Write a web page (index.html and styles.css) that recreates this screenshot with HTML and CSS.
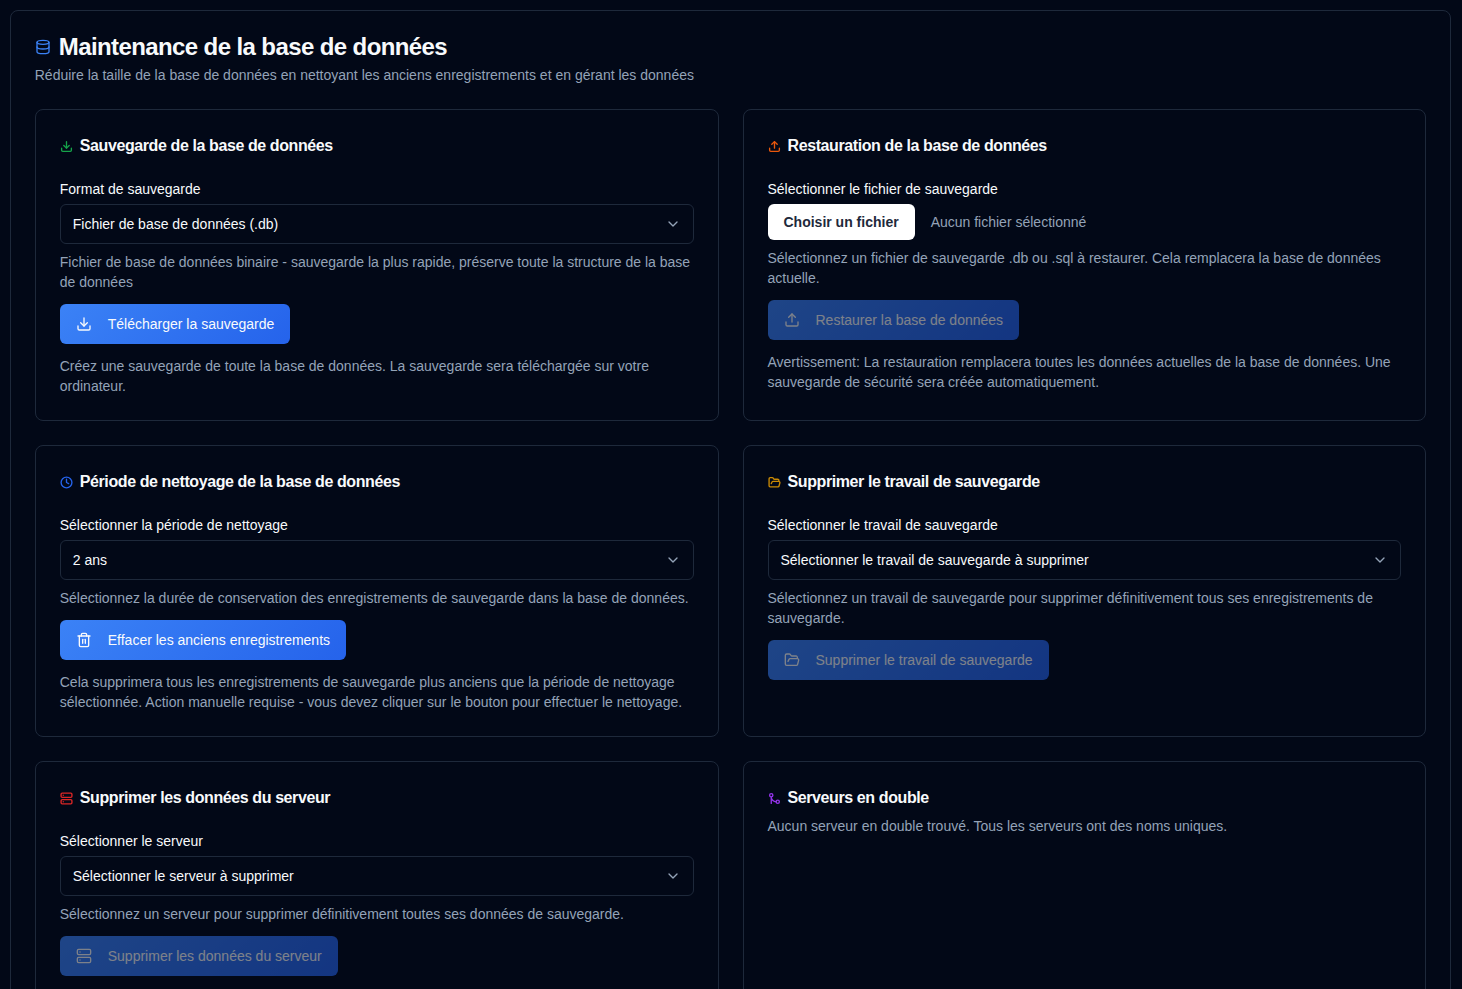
FILE: index.html
```html
<!DOCTYPE html>
<html lang="fr">
<head>
<meta charset="utf-8">
<title>Maintenance de la base de données</title>
<link rel="stylesheet" href="styles.css">
</head>
<body>
<main class="panel">
  <header class="panel-head">
    <h1 class="panel-title">
      <svg class="icon icon-16 c-blue" viewBox="0 0 24 24"><ellipse cx="12" cy="5" rx="9" ry="3"/><path d="M3 5V19A9 3 0 0 0 21 19V5"/><path d="M3 12A9 3 0 0 0 21 12"/></svg>
      Maintenance de la base de données
    </h1>
    <p class="panel-sub">Réduire la taille de la base de données en nettoyant les anciens enregistrements et en gérant les données</p>
  </header>
  <div class="grid">
    <section class="card">
      <h2 class="card-title"><svg class="icon icon-13 c-green" viewBox="0 0 24 24"><path d="M21 15v4a2 2 0 0 1-2 2H5a2 2 0 0 1-2-2v-4"/><polyline points="7 10 12 15 17 10"/><line x1="12" y1="15" x2="12" y2="3"/></svg>Sauvegarde de la base de données</h2>
      <div class="label">Format de sauvegarde</div>
      <div class="select"><span>Fichier de base de données (.db)</span><svg class="icon icon-16 chev" viewBox="0 0 24 24"><path d="m6 9 6 6 6-6"/></svg></div>
      <p class="hint">Fichier de base de données binaire - sauvegarde la plus rapide, préserve toute la structure de la base de données</p>
      <button class="btn"><svg class="icon icon-16" viewBox="0 0 24 24"><path d="M21 15v4a2 2 0 0 1-2 2H5a2 2 0 0 1-2-2v-4"/><polyline points="7 10 12 15 17 10"/><line x1="12" y1="15" x2="12" y2="3"/></svg>Télécharger la sauvegarde</button>
      <p class="note">Créez une sauvegarde de toute la base de données. La sauvegarde sera téléchargée sur votre ordinateur.</p>
    </section>
    <section class="card">
      <h2 class="card-title"><svg class="icon icon-13 c-orange" viewBox="0 0 24 24"><path d="M21 15v4a2 2 0 0 1-2 2H5a2 2 0 0 1-2-2v-4"/><polyline points="17 8 12 3 7 8"/><line x1="12" y1="3" x2="12" y2="15"/></svg>Restauration de la base de données</h2>
      <div class="label">Sélectionner le fichier de sauvegarde</div>
      <div class="file"><button class="file-btn">Choisir un fichier</button><span class="file-name">Aucun fichier sélectionné</span></div>
      <p class="hint">Sélectionnez un fichier de sauvegarde .db ou .sql à restaurer. Cela remplacera la base de données actuelle.</p>
      <button class="btn is-disabled"><svg class="icon icon-16" viewBox="0 0 24 24"><path d="M21 15v4a2 2 0 0 1-2 2H5a2 2 0 0 1-2-2v-4"/><polyline points="17 8 12 3 7 8"/><line x1="12" y1="3" x2="12" y2="15"/></svg>Restaurer la base de données</button>
      <p class="note">Avertissement: La restauration remplacera toutes les données actuelles de la base de données. Une sauvegarde de sécurité sera créée automatiquement.</p>
    </section>
    <section class="card">
      <h2 class="card-title"><svg class="icon icon-13 c-blue2" viewBox="0 0 24 24"><circle cx="12" cy="12" r="10"/><polyline points="12 6 12 12 16 14"/></svg>Période de nettoyage de la base de données</h2>
      <div class="label">Sélectionner la période de nettoyage</div>
      <div class="select"><span>2 ans</span><svg class="icon icon-16 chev" viewBox="0 0 24 24"><path d="m6 9 6 6 6-6"/></svg></div>
      <p class="hint">Sélectionnez la durée de conservation des enregistrements de sauvegarde dans la base de données.</p>
      <button class="btn"><svg class="icon icon-16" viewBox="0 0 24 24"><path d="M3 6h18"/><path d="M19 6v14c0 1-1 2-2 2H7c-1 0-2-1-2-2V6"/><path d="M8 6V4c0-1 1-2 2-2h4c1 0 2 1 2 2v2"/><line x1="10" y1="11" x2="10" y2="17"/><line x1="14" y1="11" x2="14" y2="17"/></svg>Effacer les anciens enregistrements</button>
      <p class="note">Cela supprimera tous les enregistrements de sauvegarde plus anciens que la période de nettoyage sélectionnée. Action manuelle requise - vous devez cliquer sur le bouton pour effectuer le nettoyage.</p>
    </section>
    <section class="card">
      <h2 class="card-title"><svg class="icon icon-13 c-yellow" viewBox="0 0 24 24"><path d="m6 14 1.45-2.9A2 2 0 0 1 9.24 10H20a2 2 0 0 1 1.94 2.5l-1.55 6a2 2 0 0 1-1.94 1.5H4a2 2 0 0 1-2-2V5c0-1.1.9-2 2-2h3.93a2 2 0 0 1 1.66.9l.82 1.2a2 2 0 0 0 1.66.9H18a2 2 0 0 1 2 2v2"/></svg>Supprimer le travail de sauvegarde</h2>
      <div class="label">Sélectionner le travail de sauvegarde</div>
      <div class="select"><span>Sélectionner le travail de sauvegarde à supprimer</span><svg class="icon icon-16 chev" viewBox="0 0 24 24"><path d="m6 9 6 6 6-6"/></svg></div>
      <p class="hint">Sélectionnez un travail de sauvegarde pour supprimer définitivement tous ses enregistrements de sauvegarde.</p>
      <button class="btn is-disabled"><svg class="icon icon-16" viewBox="0 0 24 24"><path d="m6 14 1.45-2.9A2 2 0 0 1 9.24 10H20a2 2 0 0 1 1.94 2.5l-1.55 6a2 2 0 0 1-1.94 1.5H4a2 2 0 0 1-2-2V5c0-1.1.9-2 2-2h3.93a2 2 0 0 1 1.66.9l.82 1.2a2 2 0 0 0 1.66.9H18a2 2 0 0 1 2 2v2"/></svg>Supprimer le travail de sauvegarde</button>
    </section>
    <section class="card">
      <h2 class="card-title"><svg class="icon icon-13 c-red" viewBox="0 0 24 24"><rect x="2" y="2" width="20" height="8" rx="2"/><rect x="2" y="14" width="20" height="8" rx="2"/><line x1="6" y1="6" x2="6.01" y2="6"/><line x1="6" y1="18" x2="6.01" y2="18"/></svg>Supprimer les données du serveur</h2>
      <div class="label">Sélectionner le serveur</div>
      <div class="select"><span>Sélectionner le serveur à supprimer</span><svg class="icon icon-16 chev" viewBox="0 0 24 24"><path d="m6 9 6 6 6-6"/></svg></div>
      <p class="hint">Sélectionnez un serveur pour supprimer définitivement toutes ses données de sauvegarde.</p>
      <button class="btn is-disabled"><svg class="icon icon-16" viewBox="0 0 24 24"><rect x="2" y="2" width="20" height="8" rx="2"/><rect x="2" y="14" width="20" height="8" rx="2"/><line x1="6" y1="6" x2="6.01" y2="6"/><line x1="6" y1="18" x2="6.01" y2="18"/></svg>Supprimer les données du serveur</button>
    </section>
    <section class="card">
      <h2 class="card-title"><svg class="icon icon-13 c-purple" viewBox="0 0 24 24"><circle cx="18" cy="18" r="3"/><circle cx="6" cy="6" r="3"/><path d="M6 21V9a9 9 0 0 0 9 9"/></svg>Serveurs en double</h2>
      <p class="empty">Aucun serveur en double trouvé. Tous les serveurs ont des noms uniques.</p>
    </section>
  </div>
</main>
</body>
</html>
```

FILE: styles.css
```css
* { box-sizing: border-box; }
html, body { margin: 0; height: 989px; overflow: hidden; }
body {
  padding: 10px 10.75px 0 9.75px;
  background: #020817;
  color: #f8fafc;
  font-family: "Liberation Sans", Arial, sans-serif;
  font-size: 14px;
  line-height: 20px;
}
.panel {
  border: 1px solid #1e293b;
  border-radius: 8px;
  padding: 24px;
}
.panel-head { margin-bottom: 24px; }
.panel-title {
  display: flex;
  align-items: center;
  gap: 8px;
  margin: 0;
  font-size: 24px;
  line-height: 24px;
  font-weight: 700;
  letter-spacing: -0.6px;
}
.panel-sub { margin: 6px 0 0; color: #94a3b8; }
.grid {
  display: grid;
  grid-template-columns: 1fr 1fr;
  gap: 24px;
}
.card {
  border: 1px solid #1e293b;
  border-radius: 8px;
  padding: 24px;
}
.card-title {
  display: flex;
  align-items: center;
  gap: 7px;
  margin: 0;
  font-size: 16px;
  line-height: 24px;
  font-weight: 700;
  letter-spacing: -0.4px;
}
.card-title .icon { stroke-width: 2.5; }
.label { margin-top: 21px; }
.select {
  display: flex;
  align-items: center;
  justify-content: space-between;
  height: 40px;
  margin-top: 5px;
  padding: 0 12px;
  border: 1px solid #1e293b;
  border-radius: 6px;
}
.hint, .note, .empty { margin: 0; color: #94a3b8; }
.hint { margin-top: 8px; }
.note { margin-top: 12px; }
.empty { margin-top: 6px; }
.btn {
  display: flex;
  align-items: center;
  gap: 16px;
  height: 40px;
  margin-top: 12px;
  padding: 0 16px;
  border: 0;
  border-radius: 6px;
  background: linear-gradient(135deg, #3b82f6, #2563eb);
  color: #f8fafc;
  font: inherit;
}
.btn.is-disabled { opacity: 0.5; }
.file {
  display: flex;
  align-items: center;
  gap: 16px;
  margin-top: 5px;
}
.file-btn {
  height: 36px;
  padding: 0 16px;
  border: 0;
  border-radius: 6px;
  background: #fff;
  color: #1e293b;
  font: inherit;
  font-weight: 700;
}
.file-name { color: #94a3b8; }
.icon {
  flex: none;
  fill: none;
  stroke: currentColor;
  stroke-width: 2;
  stroke-linecap: round;
  stroke-linejoin: round;
}
.icon-13 { width: 13px; height: 13px; }
.icon-16 { width: 16px; height: 16px; }
.chev { color: #94a3b8; }
.c-blue { color: #3b82f6; }
.c-blue2 { color: #2563eb; }
.c-green { color: #16a34a; }
.c-orange { color: #ea580c; }
.c-yellow { color: #ca8a04; }
.c-red { color: #dc2626; }
.c-purple { color: #9333ea; }
```
